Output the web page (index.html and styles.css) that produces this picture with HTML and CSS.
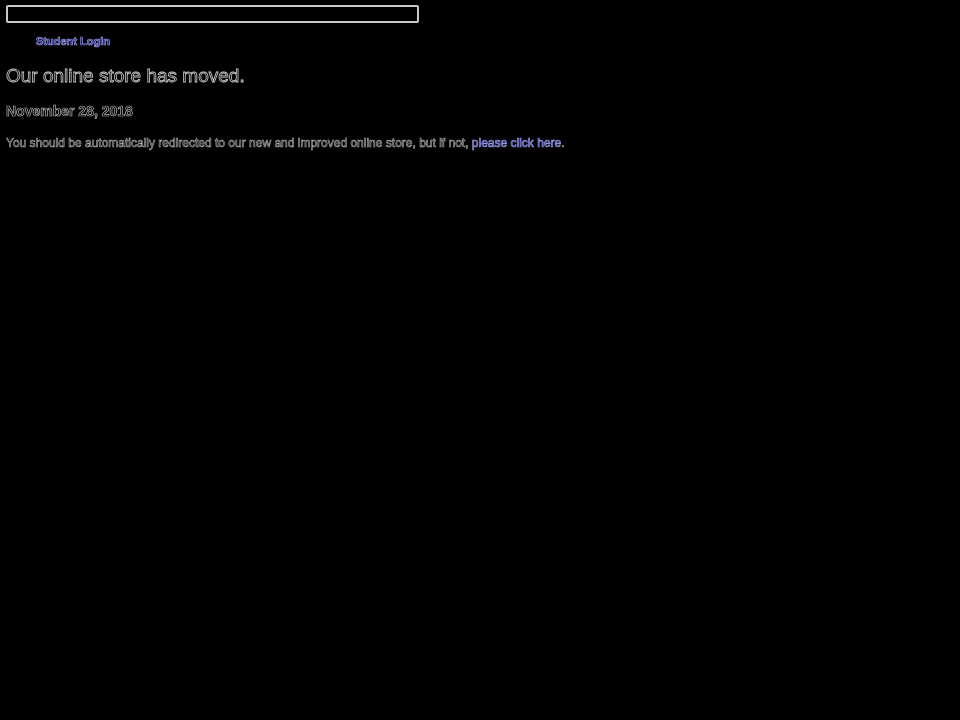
FILE: index.html
```html
<!DOCTYPE html>
<html>
<head>
<meta charset="utf-8">
<link rel="stylesheet" href="styles.css">
</head>
<body>
<div class="search"><input class="search-box" type="text"></div>
<div class="login"><a href="#" class="login-link">Student Login</a></div>
<h1 class="title">Our online store has moved.</h1>
<h2 class="date">November 28, 2018</h2>
<p class="msg">You should be automatically redirected to our new and improved online store, but if not, <a href="#" class="msg-link">please click here</a>.</p>
</body>
</html>
```
FILE: styles.css
```css
html, body {
  background: #000;
}
body {
  margin: 5px 6px;
  font-family: "Liberation Sans", Arial, sans-serif;
  color: #000;
  -webkit-text-stroke: 0.7px #b0b0b0;
  will-change: transform;
}
.search {
  height: 18px;
}
.search-box {
  display: block;
  box-sizing: border-box;
  width: 413px;
  height: 18px;
  margin: 0;
  border: 2px solid #c8c8c8;
  border-radius: 2px;
  background: #000;
  -webkit-text-stroke: 0;
}
.login {
  margin-top: 11px;
  padding-left: 30px;
  font-size: 11px;
  font-weight: bold;
  line-height: 14px;
}
.login-link {
  text-decoration: none;
  color: #1a1a70;
  -webkit-text-stroke: 0.7px #9a9ae8;
}
.title {
  margin: 16px 0 0;
  font-size: 19px;
  font-weight: normal;
  line-height: 24px;
  -webkit-text-stroke: 0.8px #c8c8c8;
}
.date {
  margin: 14px 0 0;
  font-size: 14px;
  font-weight: bold;
  line-height: 18px;
}
.msg {
  margin: 15px 0 0;
  font-size: 12px;
  font-weight: normal;
  line-height: 16px;
  -webkit-text-stroke: 0.6px #b0b0b0;
}
.msg-link {
  text-decoration: none;
  color: #1a1a70;
  font-weight: normal;
  -webkit-text-stroke: 0.7px #9a9ae8;
}
```
